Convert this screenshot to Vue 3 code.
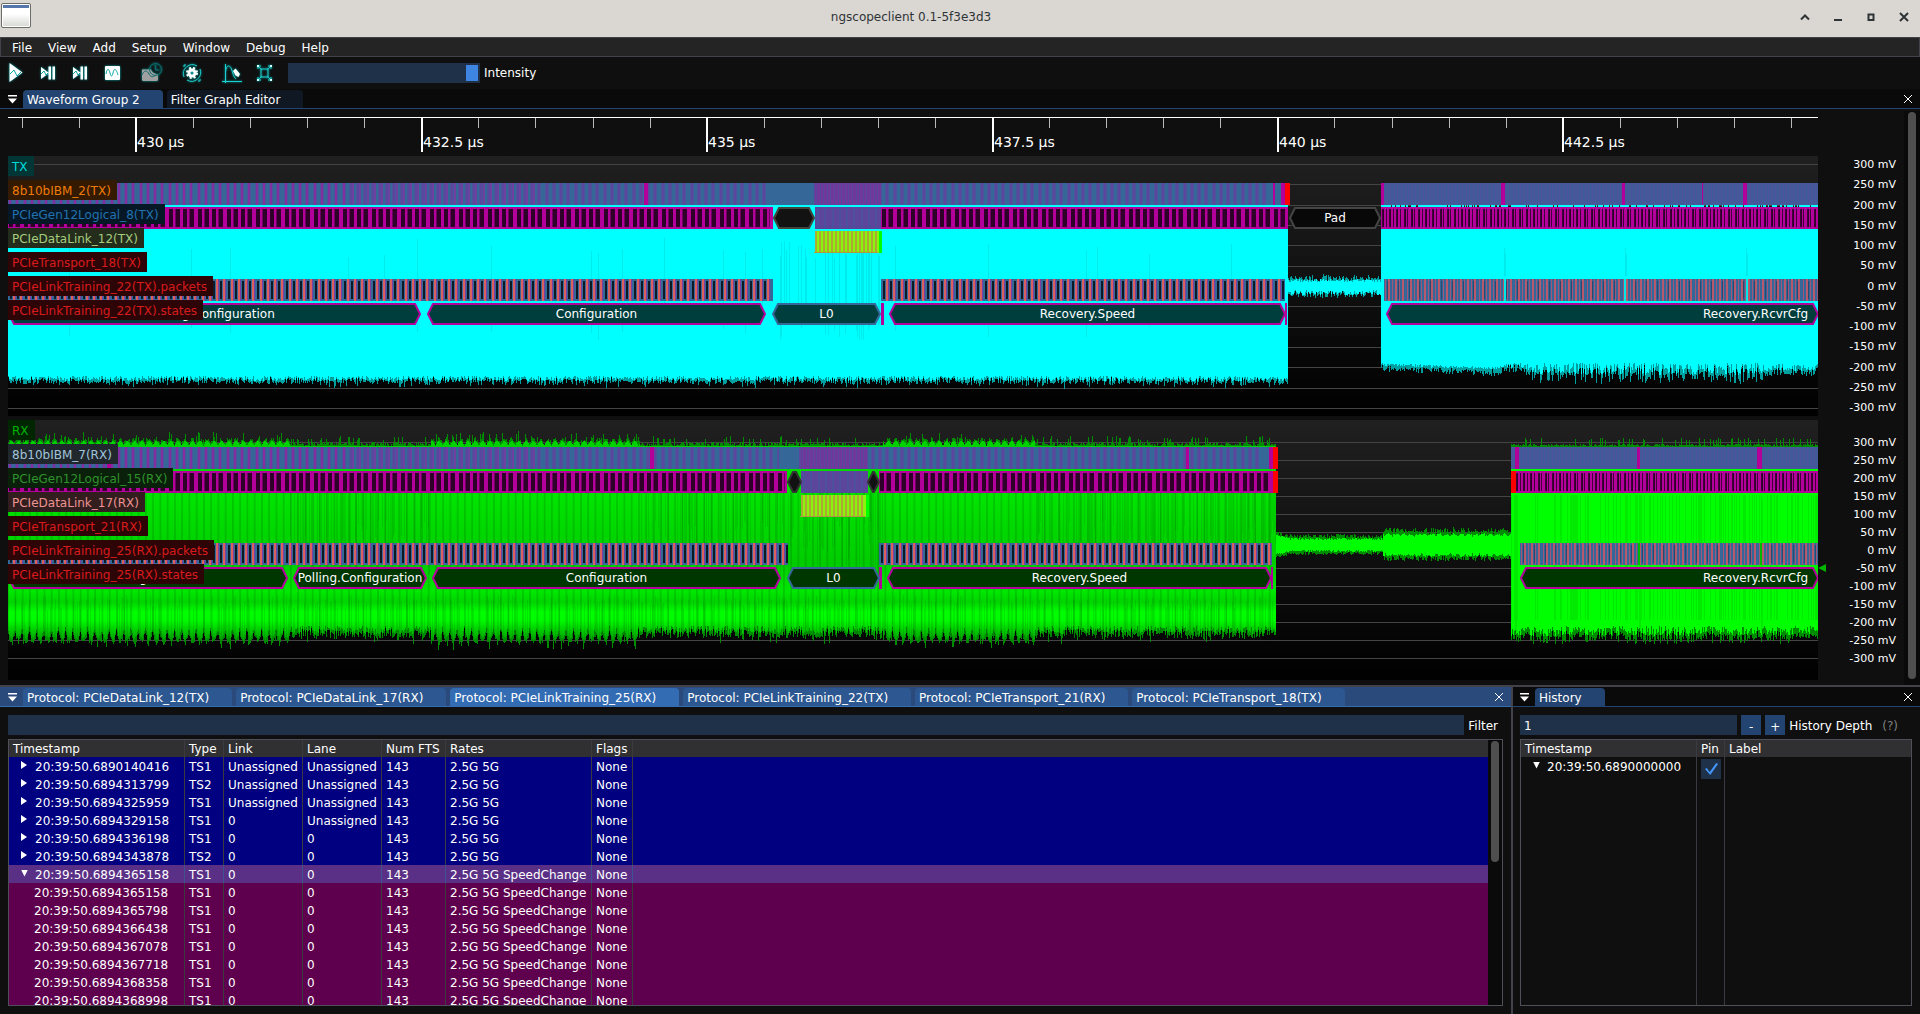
<script setup>
const menus = ['File', 'View', 'Add', 'Setup', 'Window', 'Debug', 'Help']

const X0 = 8
const X1 = 1818
const W = X1 - X0
const pct = (x) => ((x - X0) / W) * 100 + '%'

// timeline
const majors = [
  { x: 135, t: '430 µs' },
  { x: 421, t: '432.5 µs' },
  { x: 706, t: '435 µs' },
  { x: 992, t: '437.5 µs' },
  { x: 1277, t: '440 µs' },
  { x: 1562, t: '442.5 µs' },
]
const minors = []
for (let i = -2; i < 30; i++) {
  const x = Math.round(136 + i * 57.07)
  if (i % 5 !== 0 && x > X0 && x < X1) minors.push(x)
}

const volts = [300, 250, 200, 150, 100, 50, 0, -50, -100, -150, -200, -250, -300]

// seeded noise so the traces are stable between renders
function rng(seed) {
  let a = seed
  return () => {
    a = (a + 0x6d2b79f5) | 0
    let t = Math.imul(a ^ (a >>> 15), 1 | a)
    t = (t + Math.imul(t ^ (t >>> 7), 61 | t)) ^ t
    return ((t ^ (t >>> 14)) >>> 0) / 4294967296
  }
}
const col = (x, a, b) => `M${x} ${Math.round(a)}h1V${Math.round(b)}h-1z`

function bars(x0, x1, period, offset, w, y, h) {
  let d = ''
  for (let x = x0 + offset; x < x1 - w; x += period) {
    d += `M${Math.round(x)} ${y}h${w}v${h}h${-w}z`
  }
  return d
}
const box = (x0, x1, y, h) => `M${x0} ${y}H${x1}V${y + h}H${x0}z`
const hex = (a, b, y) =>
  `M${a + 1} ${y + 11}L${a + 6} ${y + 1}H${b - 6}L${b - 1} ${y + 11}L${b - 6} ${y + 21}H${a + 6}z`

const P = 7.25
const Q = 3.6
const BLUE = '#356799'
const MAG = '#b4009a'

function txWave() {
  const r = rng(7)
  let dim = ''
  let bright = ''
  let faint = ''
  for (let x = X0; x < X1; x++) {
    let t = 28
    let b
    let d
    let td = 28
    if (x < 1288) {
      b = 220 + r() * 5
      d = b + 1 + r() * 4 + (r() < 0.05 ? 4 : 0)
    } else if (x < 1381) {
      t = 123 + r() * 3
      b = 134 + r() * 5
      td = t - r() * 5
      d = b + r() * 4
    } else {
      t = r() < 0.2 ? 51 : 28
      td = t
      if (x < 1500) {
        b = 207 + ((x - 1381) / 120) * 4 + r() * 3
        d = b + 2 + r() * 5
      } else if (x < 1525) {
        b = 207 + r() * 5
        d = b + r() * 8
      } else if (x < 1765) {
        b = 207 + r() * 12
        d = b + 2 + r() * 8
      } else {
        b = 208 + r() * 7
        d = b + 2 + r() * 5
      }
    }
    bright += col(x, t, b)
    dim += col(x, td, d)
    if ((x < 1285 && r() < 0.02) || (x > 773 && x < 882 && r() < 0.2)) {
      faint += col(x, 82 + r() * 20, 165 + r() * 20)
    }
  }
  for (const x of [1504, 1625, 1746]) faint += col(x, 92, 120) + col(x + 1, 98, 120)
  return { dim, bright, faint }
}

function rxWave() {
  const r = rng(21)
  const strong = (x) => x < 290 || (x > 430 && x < 640) || (x > 882 && x < 1035)
  let dim = ''
  let body = ''
  let bright = ''
  let faint = ''
  for (let x = X0; x < X1; x++) {
    const ph = Math.abs(Math.sin((Math.PI * x) / P))
    const s = strong(x)
    if (x < 1276) {
      const t = s ? 26 - 5 * ph : 26
      const td = t - r() * 4 - (r() < 0.12 ? 6 : 0)
      const b = s ? 206 + 11 * ph + r() * 4 : 206 + r() * 8
      body += col(x, t, b)
      dim += col(x, td, b + 2 + r() * 4 + (r() < 0.06 ? 5 : 0))
      if (!s && r() < 0.4) faint += col(x, 73, 100 + r() * 60)
      if (r() < 0.3) faint += col(x, 175 + r() * 15, b)
    } else if (x < 1511) {
      const wide = x > 1382
      const a = wide ? 8 + 2 * ph : 5 + Math.max(0, (1290 - x) / 4)
      bright += col(x, 125 - a - r() * 2, 125 + a + r() * 2)
      dim += col(x, 125 - a - 2 - r() * (wide ? 6 : 4), 125 + a + 2 + r() * (wide ? 5 : 3))
    } else {
      const b = 206 + r() * 10
      bright += col(x, 27, b)
      dim += col(x, 26 - r() * 2 - (r() < 0.15 ? 6 : 0), b + 4 + r() * 5)
      if (r() < 0.3) faint += col(x, 75, 200)
    }
  }
  for (const x of [1515, 1639, 1761]) {
    for (let k = 0; k < 4; k++) faint += col(x, 75, 214) + col(x + 1, 80, 214)
  }
  return { dim, body, bright, faint }
}

function decode(o) {
  const s = []
  const add = (fill, d) => s.push({ fill, d })
  // symbol decode
  for (const [a, b] of o.sym) add(BLUE, box(a, b, 27, 22))
  add('#4d549c', bars(X0, o.symEnd, P, 0, 4, 27, 22))
  add('#5b479e', bars(X0, o.symEnd, P, 1, 2, 27, 22))
  add('#8030a0', bars(X0, 350, P, 1, 2, 27, 22))
  add('#6e40a0', bars(350, 540, P, 2, 2, 27, 22))
  add(BLUE, box(o.idle[0], o.idle[1], 27, 22))
  add('#70389b', box(o.data[0], o.data[1], 27, 22))
  add('#58489e', bars(o.data[0], o.data[1], Q, 1, 1, 27, 22))
  add('#435a99', box(o.fast, X1, 27, 22))
  add('#4c529c', bars(o.fast, X1, Q, 1, 1, 27, 22))
  for (const [x, w] of o.marks) add(MAG, box(x, x + w, 27, 22))
  // logical sub-block
  for (const [a, b] of o.log) {
    add(MAG, box(a, b, 51, 22))
    add('#2e0029', bars(a, b, P, 1, 4, 53, 18))
    add('#6e0061', bars(a, b, P * 2, 7, 1, 53, 18))
  }
  add('#5c469c', box(o.data[0], o.data[1], 51, 22))
  add('#4d519c', bars(o.data[0], o.data[1], P, 2, 2, 51, 22))
  add(MAG, box(o.fastLog, X1, 51, 22))
  add('#40003a', bars(o.fastLog, X1, Q, 1, 1, 53, 18))
  add('#2e0029', bars(o.fastLog, X1, Q * 2, 2, 1, 53, 18))
  // data link
  add('#8af50a', box(o.data[0], o.data[1] - 2, 75, 22))
  add('#aca838', bars(o.data[0], o.data[1] - 2, 4, 0, 2, 75, 22))
  add('#b09a40', box(o.data[0] - 1, o.data[1] - 3, 96, 1))
  add('#00ff00', box(o.data[1] - 2, o.data[1] + 1, 75, 22))
  // training packets
  for (const [a, b] of o.pkt) {
    add(BLUE, box(a, b, 123, 22))
    add('#0d1a26', bars(a, b, P, 2, 2, 125, 18))
    add('#d9605c', bars(a, b, P, 5, 2, 123, 22))
    add('#7a3fa0', bars(a, b, P, 7, 1, 123, 22))
  }
  add(BLUE, box(o.fastPkt, X1, 123, 22))
  add('#a0567c', bars(o.fastPkt, X1, Q, 1, 1, 123, 22))
  add('#b8586c', bars(o.fastPkt, X1, Q * 2, 4, 2, 123, 22))
  add('#244a70', bars(o.fastPkt, X1, Q * 3, 3, 1, 125, 18))
  for (const x of o.gaps) add(o.gap, box(x, x + 2, 123, 22))
  for (const [x, y, w] of o.errors) add('#ff0000', box(x, x + w, y, 22))
  for (const [x, w] of o.stateMarks) add(MAG, box(x, x + w, 147, 22))
  return s
}

const grid = (top, step) => volts.map((_, i) => Math.round(top + i * step))

const channels = [
  {
    id: 'tx',
    wave: txWave(),
    grid: grid(8, 20.33),
    fill: '#003e3e',
    shapes: decode({
      sym: [[X0, 1285]],
      symEnd: 1272,
      idle: [766, 814],
      data: [815, 881],
      fast: 1382,
      marks: [[644, 4], [1273, 2], [1281, 4], [1381, 3], [1501, 4], [1622, 3], [1702, 1], [1743, 4]],
      log: [[X0, 773], [881, 1288]],
      fastLog: 1381,
      pkt: [[X0, 773], [881, 1285]],
      fastPkt: 1384,
      gaps: [1504, 1624, 1746],
      gap: '#00e8e8',
      errors: [[1285, 27, 5]],
      stateMarks: [[881, 3], [1285, 2]],
    }),
    hexes: [
      { d: hex(773, 815, 51), s: '#44443f', f: '#121212' },
      { d: hex(1289, 1381, 51), s: '#444', f: '#080808' },
      { d: hex(8, 421, 147), s: MAG },
      { d: hex(427, 766, 147), s: MAG },
      { d: hex(772, 881, 147), s: BLUE },
      { d: hex(889, 1286, 147), s: MAG },
      { d: hex(1386, 1819, 147), s: MAG },
    ],
    names: [
      { t: 'Pad', a: 1289, b: 1381, row: 'logical' },
      { t: 'Polling.Configuration', a: 8, b: 417 },
      { t: 'Configuration', a: 427, b: 766 },
      { t: 'L0', a: 772, b: 881 },
      { t: 'Recovery.Speed', a: 889, b: 1286 },
      { t: 'Recovery.RcvrCfg', a: 1386, b: 1818, end: true },
    ],
    labels: [
      { t: 'TX', k: 'cyan' },
      { t: '8b10bIBM_2(TX)', k: 'orange' },
      { t: 'PCIeGen12Logical_8(TX)', k: 'navy' },
      { t: 'PCIeDataLink_12(TX)', k: 'olive' },
      { t: 'PCIeTransport_18(TX)', k: 'red' },
      { t: 'PCIeLinkTraining_22(TX).packets', k: 'red' },
      { t: 'PCIeLinkTraining_22(TX).states', k: 'red' },
    ],
  },
  {
    id: 'rx',
    wave: rxWave(),
    grid: grid(22, 18),
    fill: '#003600',
    shapes: decode({
      sym: [[X0, 1271]],
      symEnd: 1265,
      idle: [779, 799],
      data: [801, 868],
      fast: 1511,
      marks: [[107, 4], [650, 4], [1186, 3], [1269, 5], [1515, 4], [1637, 3], [1757, 5]],
      log: [[X0, 787], [879, 1273]],
      fastLog: 1515,
      pkt: [[X0, 788], [879, 1272]],
      fastPkt: 1520,
      gaps: [1638, 1760],
      gap: '#00b800',
      errors: [[1273, 27, 5], [1273, 51, 5], [1511, 51, 5]],
      stateMarks: [[879, 3], [1271, 2]],
    }),
    hexes: [
      { d: hex(787, 802, 51), s: '#333', f: '#121212' },
      { d: hex(867, 880, 51), s: '#333', f: '#121212' },
      { d: hex(8, 288, 147), s: MAG },
      { d: hex(293, 427, 147), s: MAG },
      { d: hex(432, 781, 147), s: MAG },
      { d: hex(787, 880, 147), s: BLUE },
      { d: hex(887, 1272, 147), s: MAG },
      { d: hex(1520, 1819, 147), s: MAG },
    ],
    names: [
      { t: 'Polling.Active', a: 8, b: 288 },
      { t: 'Polling.Configuration', a: 293, b: 427 },
      { t: 'Configuration', a: 432, b: 781 },
      { t: 'L0', a: 787, b: 880 },
      { t: 'Recovery.Speed', a: 887, b: 1272 },
      { t: 'Recovery.RcvrCfg', a: 1520, b: 1818, end: true },
    ],
    labels: [
      { t: 'RX', k: 'green' },
      { t: '8b10bIBM_7(RX)', k: 'steel' },
      { t: 'PCIeGen12Logical_15(RX)', k: 'forest' },
      { t: 'PCIeDataLink_17(RX)', k: 'salmon' },
      { t: 'PCIeTransport_21(RX)', k: 'red' },
      { t: 'PCIeLinkTraining_25(RX).packets', k: 'red' },
      { t: 'PCIeLinkTraining_25(RX).states', k: 'red' },
    ],
  },
]

const protoTabs = [
  'PCIeDataLink_12(TX)',
  'PCIeDataLink_17(RX)',
  'PCIeLinkTraining_25(RX)',
  'PCIeLinkTraining_22(TX)',
  'PCIeTransport_21(RX)',
  'PCIeTransport_18(TX)',
]

const U = 'Unassigned'
const SC = '2.5G 5G SpeedChange'
const rows = [
  ['20:39:50.6890140416', 'TS1', U, U, '2.5G 5G', 'closed'],
  ['20:39:50.6894313799', 'TS2', U, U, '2.5G 5G', 'closed'],
  ['20:39:50.6894325959', 'TS1', U, U, '2.5G 5G', 'closed'],
  ['20:39:50.6894329158', 'TS1', '0', U, '2.5G 5G', 'closed'],
  ['20:39:50.6894336198', 'TS1', '0', '0', '2.5G 5G', 'closed'],
  ['20:39:50.6894343878', 'TS2', '0', '0', '2.5G 5G', 'closed'],
  ['20:39:50.6894365158', 'TS1', '0', '0', SC, 'open'],
  ['20:39:50.6894365158', 'TS1', '0', '0', SC, 'child'],
  ['20:39:50.6894365798', 'TS1', '0', '0', SC, 'child'],
  ['20:39:50.6894366438', 'TS1', '0', '0', SC, 'child'],
  ['20:39:50.6894367078', 'TS1', '0', '0', SC, 'child'],
  ['20:39:50.6894367718', 'TS1', '0', '0', SC, 'child'],
  ['20:39:50.6894368358', 'TS1', '0', '0', SC, 'child'],
  ['20:39:50.6894368998', 'TS1', '0', '0', SC, 'child'],
]
</script>

<template>
  <div class="app">
    <header class="titlebar">
      <span class="win-icon"></span>
      <h1>ngscopeclient 0.1-5f3e3d3</h1>
      <div class="win-controls">
        <button aria-label="Roll up"><svg viewBox="0 0 12 12"><path d="M2 8.500L6 4.500L10 8.500" /></svg></button>
        <button aria-label="Minimize"><svg viewBox="0 0 12 12"><path d="M2 9H10" /></svg></button>
        <button aria-label="Maximize"><svg viewBox="0 0 12 12"><path d="M3.500 3.500H8.500V9H3.500z" /></svg></button>
        <button aria-label="Close"><svg viewBox="0 0 12 12"><path d="M2 2L10 10M10 2L2 10" /></svg></button>
      </div>
    </header>

    <nav class="menubar">
      <button v-for="m in menus" :key="m">{{ m }}</button>
    </nav>

    <div class="toolbar">
      <div class="tools">
        <button aria-label="Start">
          <svg viewBox="4 59 24 24">
            <path class="w" d="M9.500 62L22.500 71.500L9.500 81z" />
            <path class="t" d="M10 73L14 69L17 75L21 71" />
          </svg>
        </button>
        <button aria-label="Single">
          <svg viewBox="36 59 24 24">
            <path class="w" d="M41 66L49 72L41 78z" />
            <path class="t" d="M41 73L44 70L46 74L48 72" />
            <path class="w" d="M48.500 65.500h2.500v13h-2.500zM52.500 65.500h2.500v13h-2.500z" />
          </svg>
        </button>
        <button aria-label="Force">
          <svg viewBox="68 59 24 24">
            <path class="w" d="M73 66L81 72L73 78z" />
            <path class="t" d="M73 73L76 70L78 74L80 72" />
            <path class="w" d="M80.500 65.500h2.500v13h-2.500zM84.500 65.500h2.500v13h-2.500z" />
          </svg>
        </button>
        <button aria-label="Auto">
          <svg viewBox="100 59 24 24">
            <rect class="w" x="105" y="65" width="15" height="14" rx="1" />
            <path class="t" d="M106 73C107 67 109 67 110 72C111 76 112 76 113 72C114 67 116 67 118 74" />
          </svg>
        </button>
      </div>
      <div class="tools">
        <button aria-label="History">
          <svg viewBox="140 59 24 24" class="dimmed">
            <path class="g" d="M142 68.500h9q1 4 7 5v5q0 1.500-1.500 1.500h-13q-1.500 0-1.500-1.500z" />
            <path class="t" d="M142 74C144 69 147 69 149 73C151 77 154 76 156 73.500" />
            <circle class="t" cx="155.500" cy="68.500" r="6" />
            <path class="t" d="M155.500 64V69H159" />
          </svg>
        </button>
      </div>
      <div class="tools">
        <button aria-label="Refresh settings">
          <svg viewBox="180 59 24 24">
            <circle class="w" cx="192" cy="72" r="4.500" />
            <circle class="teeth" cx="192" cy="72" r="5" />
            <circle class="hole" cx="192" cy="72" r="1.600" />
            <path class="c" d="M184 76A9 9 0 0 1 197 65M200 68A9 9 0 0 1 187 79M186 64L184 64L184 66M198 80L200 80L200 78" />
          </svg>
        </button>
      </div>
      <div class="tools">
        <button aria-label="Clear sweeps">
          <svg viewBox="220 59 24 24">
            <path class="c" d="M225.500 63V82M222 80.500H242M225.500 71C226 65 229 63 231 67C233 71 233 76 236 78" />
            <path class="w" d="M233 70L235.500 67.500L240 73L238.500 76L235.500 74.500z" />
          </svg>
        </button>
        <button aria-label="Fullscreen">
          <svg viewBox="252 59 24 24">
            <path class="c" d="M258 68V65H261M268 65H271V68M271 76V79H268M261 79H258V76M258 65L262 69M271 65L267 69M271 79L267 75M258 79L262 75M261 68H268V76H261z" />
            <path class="dots" d="M257 64h2v2h-2zM270 64h2v2h-2zM257 78h2v2h-2zM270 78h2v2h-2z" />
          </svg>
        </button>
      </div>
      <input id="intensity" class="slider" type="range" min="0" max="100" value="100" />
      <label for="intensity">Intensity</label>
    </div>

    <section class="group">
      <div class="tabbar">
        <button class="tab-menu" aria-label="Tab list"></button>
        <button class="tab active">Waveform Group 2</button>
        <button class="tab">Filter Graph Editor</button>
        <button class="close" aria-label="Close group"><svg viewBox="0 0 10 10"><path d="M1 1L9 9M9 1L1 9" /></svg></button>
      </div>
      <div class="group-body">
        <div class="scope">
          <div class="timeline">
            <svg :viewBox="`${X0} 0 ${W} 42`" preserveAspectRatio="none">
              <path class="rule" :d="`M${X0} 6h${W}v1h${-W}z`" />
              <rect v-for="m in minors" :key="m" class="minor" :x="m" y="7" width="1" height="10" />
              <rect v-for="m in majors" :key="m.x" class="rule" :x="m.x" y="7" width="2" height="34" />
            </svg>
            <span v-for="m in majors" :key="m.t" :style="{ left: pct(m.x) }">{{ m.t }}</span>
          </div>

          <div v-for="c in channels" :key="c.id" class="channel">
            <div class="plot">
              <svg :viewBox="`${X0} 0 ${W} 260`" preserveAspectRatio="none">
                <defs>
                  <linearGradient :id="c.id + '-body'" gradientUnits="userSpaceOnUse" x1="0" y1="20" x2="0" y2="225">
                    <stop offset="0" stop-color="#00d000" />
                    <stop offset="0.28" stop-color="#00e400" />
                    <stop offset="0.6" stop-color="#00cc00" />
                    <stop offset="0.74" stop-color="#00e800" />
                    <stop offset="0.79" stop-color="#00d400" />
                    <stop offset="0.84" stop-color="#00ff00" />
                    <stop offset="0.88" stop-color="#00fa00" />
                    <stop offset="1" stop-color="#008800" />
                  </linearGradient>
                  <pattern :id="c.id + '-ripple'" patternUnits="userSpaceOnUse" width="7.25" height="260">
                    <rect width="2" height="260" fill="#000" opacity="0.12" />
                  </pattern>
                </defs>
                <rect v-for="y in c.grid" :key="y" class="gridline" :x="X0" :y="y" :width="W" height="1" />
                <path :class="['dim', c.id]" :d="c.wave.dim" />
                <path v-if="c.wave.body" :d="c.wave.body" :fill="`url(#${c.id}-body)`" />
                <rect v-if="c.wave.body" :x="X0" y="60" width="1268" height="158" :fill="`url(#${c.id}-ripple)`" />
                <path :class="['bright', c.id]" :d="c.wave.bright" />
                <path class="faint" :d="c.wave.faint" />
                <path v-for="(s, i) in c.shapes" :key="i" :d="s.d" :fill="s.fill" />
                <path v-for="h in c.hexes" :key="h.d" class="hex" :d="h.d" :stroke="h.s" :fill="h.f || c.fill" />
              </svg>
              <span
                v-for="n in c.names"
                :key="n.a"
                :class="['name', n.row, { end: n.end }]"
                :style="{ left: pct(n.a), width: ((n.b - n.a) / W) * 100 + '%' }"
              >{{ n.t }}</span>
              <div class="labels">
                <span v-for="l in c.labels" :key="l.t" :class="l.k">{{ l.t }}</span>
              </div>
            </div>
            <div :class="['axis', c.id]">
              <span v-for="v in volts" :key="v">{{ v }} mV</span>
              <i v-if="c.id === 'rx'" class="trigger"></i>
            </div>
          </div>
        </div>
        <div class="scrollbar"><i></i></div>
      </div>
    </section>

    <div class="bottom">
      <section class="panel protocols">
        <div class="tabbar focused">
          <button class="tab-menu" aria-label="Tab list"></button>
          <button v-for="(t, i) in protoTabs" :key="t" :class="['tab', { active: i === 2 }]">Protocol: {{ t }}</button>
          <button class="close" aria-label="Close analyzer"><svg viewBox="0 0 10 10"><path d="M1 1L9 9M9 1L1 9" /></svg></button>
        </div>
        <div class="panel-body">
          <div class="field-row">
            <input id="filter" type="text" />
            <label for="filter">Filter</label>
          </div>
          <div class="table-box">
            <div class="table-scroll">
              <table>
                <colgroup>
                  <col class="c-time" /><col class="c-type" /><col class="c-link" /><col class="c-link" />
                  <col class="c-fts" /><col class="c-rates" /><col class="c-flags" /><col />
                </colgroup>
                <thead>
                  <tr>
                    <th>Timestamp</th><th>Type</th><th>Link</th><th>Lane</th><th>Num FTS</th><th>Rates</th><th>Flags</th><th></th>
                  </tr>
                </thead>
                <tbody>
                  <tr v-for="(r, i) in rows" :key="i" :class="r[5]">
                    <td>
                      <div class="stamp"><button v-if="r[5] !== 'child'" class="arrow" aria-label="Toggle packet"></button>{{ r[0] }}</div>
                    </td>
                    <td>{{ r[1] }}</td>
                    <td>{{ r[2] }}</td>
                    <td>{{ r[3] }}</td>
                    <td>143</td>
                    <td>{{ r[4] }}</td>
                    <td>None</td>
                    <td></td>
                  </tr>
                </tbody>
              </table>
            </div>
            <div class="scrollbar"><i></i></div>
          </div>
        </div>
      </section>

      <section class="panel history">
        <div class="tabbar">
          <button class="tab-menu" aria-label="Tab list"></button>
          <button class="tab active">History</button>
          <button class="close" aria-label="Close history"><svg viewBox="0 0 10 10"><path d="M1 1L9 9M9 1L1 9" /></svg></button>
        </div>
        <div class="panel-body">
          <div class="field-row">
            <input id="depth" type="text" value="1" />
            <button class="step">-</button>
            <button class="step">+</button>
            <label for="depth">History Depth</label>
            <span class="help">(?)</span>
          </div>
          <div class="table-box">
            <div class="table-scroll">
              <table>
                <colgroup><col class="h-time" /><col class="h-pin" /><col /></colgroup>
                <thead>
                  <tr><th>Timestamp</th><th>Pin</th><th>Label</th></tr>
                </thead>
                <tbody>
                  <tr class="entry">
                    <td>
                      <div class="stamp"><button class="arrow down" aria-label="Toggle entry"></button>20:39:50.6890000000</div>
                    </td>
                    <td><input type="checkbox" checked aria-label="Pin" /></td>
                    <td></td>
                  </tr>
                  <tr class="rest"><td></td><td></td><td></td></tr>
                </tbody>
              </table>
            </div>
          </div>
        </div>
      </section>
    </div>
  </div>
</template>

<style>
body {
  background: #0f0f0f;
}
</style>

<style scoped>
.app {
  display: flex;
  flex-direction: column;
  height: 100vh;
  overflow: hidden;
  background: #0f0f0f;
  color: #fff;
  font: 12px/18px "DejaVu Sans", sans-serif;
}
.app *,
.app *::before {
  box-sizing: border-box;
}
button,
input {
  margin: 0;
  padding: 0;
  border: 0;
  background: none;
  color: inherit;
  font: inherit;
}
svg {
  display: block;
}

.titlebar {
  display: flex;
  align-items: flex-start;
  flex: none;
  height: 37px;
  padding: 3px 10px 0 1px;
  background: #dad6d2;
  color: #2e3436;
}
.win-icon {
  width: 30px;
  height: 25px;
  border: 1px solid #6b6d69;
  border-radius: 2px;
  background: linear-gradient(#fff 0 1px, #5577ab 1px 4px, #fff 4px, #fff 10px, #d5d8d2 100%);
  box-shadow: inset 0 0 0 1px #fff;
}
.titlebar h1 {
  flex: 1;
  margin: 5px 0 0;
  font-size: 12px;
  font-weight: 400;
  line-height: 18px;
  text-align: center;
}
.win-controls {
  display: flex;
  gap: 21px;
  padding-top: 8px;
  padding-left: 8px;
}
.win-controls svg {
  width: 12px;
  height: 12px;
  fill: none;
  stroke: #2e3436;
  stroke-width: 2;
}

.menubar {
  display: flex;
  flex: none;
  gap: 16px;
  height: 20px;
  padding: 1px 0 0 11px;
  border: 1px solid #42424b;
  background: #242424;
}

.toolbar {
  display: flex;
  flex: none;
  align-items: center;
  height: 32px;
  padding-left: 4px;
  gap: 16px;
}
.tools {
  display: flex;
  gap: 8px;
  padding-bottom: 2px;
}
.tools svg {
  width: 24px;
  height: 24px;
  fill: none;
  filter: drop-shadow(0 0 1px #00b4b4);
}
.tools .w {
  fill: #fff;
}
.tools .g {
  fill: #a0a0a0;
}
.tools .t {
  stroke: #0aa6a6;
}
.tools .c {
  stroke: #1cd0d0;
}
.tools .dots {
  fill: #d8ffff;
}
.tools .teeth {
  stroke: #fff;
  stroke-width: 2;
  stroke-dasharray: 2 2;
}
.tools .hole {
  fill: #0f8f8f;
}
.tools .dimmed .t {
  stroke: #0c6c6c;
}
.slider {
  appearance: none;
  width: 192px;
  height: 20px;
  margin-left: -4px;
  padding: 0 2px;
  background: #1f3049;
}
.slider::-webkit-slider-thumb {
  appearance: none;
  width: 12px;
  height: 16px;
  background: #3d85e0;
}
.toolbar label {
  margin-left: -12px;
}

.group {
  flex: none;
}
.tabbar {
  display: flex;
  align-items: flex-end;
  gap: 4px;
  height: 20px;
  padding-right: 7px;
  border-bottom: 1px solid #234470;
  background: #0a0a0a;
}
.tab {
  height: 18px;
  padding: 2px 23px 0 4px;
  border-radius: 4px 4px 0 0;
  background: #101824;
  line-height: 16px;
  white-space: nowrap;
}
.tab.active {
  background: #234470;
}
.tabbar.focused {
  border-color: #336cb3;
  background: #294a7a;
}
.focused .tab {
  background: #2c5790;
}
.focused .tab.active {
  background: #336cb3;
}
.tab-menu {
  width: 11px;
  height: 18px;
  margin: 0 0 0 8px;
}
.history .tab-menu {
  margin-left: 7px;
}
.tab-menu::before {
  content: "";
  display: block;
  width: 9px;
  height: 9px;
  background: #fff;
  clip-path: polygon(0 0, 100% 0, 100% 2px, 0 2px, 0 4px, 100% 4px, 50% 100%, 0 4px);
}
.close {
  align-self: center;
  margin-left: auto;
}
.close svg {
  width: 10px;
  height: 10px;
  fill: none;
  stroke: #fff;
}

.group-body {
  display: flex;
  height: 576px;
  padding: 2px 0 0 8px;
}
.scope {
  display: flex;
  flex: 1;
  flex-direction: column;
  gap: 4px;
  min-width: 0;
}
.timeline {
  position: relative;
  height: 41px;
  margin-right: 86px;
}
.timeline svg {
  width: 100%;
  height: 42px;
  shape-rendering: crispEdges;
}
.rule {
  fill: #fff;
}
.minor {
  fill: #b8b8b8;
}
.timeline span {
  position: absolute;
  top: 22px;
  padding-left: 2px;
  font-size: 14px;
}
.channel {
  display: flex;
}
.plot {
  position: relative;
  flex: 1;
  height: 260px;
  overflow: hidden;
  background: linear-gradient(#202020, #000);
}
.plot svg {
  width: 100%;
  height: 260px;
  shape-rendering: crispEdges;
}
.plot .hex {
  stroke-width: 2;
  shape-rendering: auto;
}
.gridline {
  fill: #444;
}
.dim.tx {
  fill: #00a0a0;
}
.bright.tx {
  fill: #00ffff;
}
.dim.rx {
  fill: #008c00;
}
.bright.rx {
  fill: #00ff00;
}
.faint {
  fill: #000;
  opacity: 0.08;
}
.name {
  position: absolute;
  top: 149px;
  text-align: center;
  white-space: nowrap;
}
.name.logical {
  top: 53px;
}
.name.end {
  padding-right: 10px;
  text-align: right;
}
.labels {
  position: absolute;
  top: 0;
  left: 0;
  display: flex;
  flex-direction: column;
  align-items: flex-start;
  gap: 4px;
}
.labels span {
  height: 20px;
  padding: 2px 6px 0 4px;
}
.cyan {
  background: #003636;
  color: #00dcdc;
}
.orange {
  background: #331a00;
  color: #f07c08;
}
.navy {
  background: #061826;
  color: #2272b0;
}
.olive {
  background: #242c1c;
  color: #a6cc7e;
}
.red {
  background: #2d0506;
  color: #d81b1d;
}
.green {
  background: #002600;
  color: #00b400;
}
.steel {
  background: #21282d;
  color: #a0c4da;
}
.forest {
  background: #0a200a;
  color: #2f922c;
}
.salmon {
  background: #321e1e;
  color: #ee9492;
}
.axis {
  position: relative;
  display: flex;
  flex-direction: column;
  justify-content: space-between;
  width: 86px;
  padding-top: 1px;
  padding-right: 8px;
  font-size: 11px;
  line-height: 16px;
  text-align: right;
}
.axis.rx {
  padding-top: 15px;
  padding-bottom: 13px;
}
.trigger {
  position: absolute;
  top: 144px;
  left: 0;
  border: 4px solid transparent;
  border-right: 8px solid #00b400;
  border-left: 0;
}
.scrollbar {
  width: 16px;
  padding: 1px 4px 6px;
  background: #0a0a0a;
}
.scrollbar i {
  display: block;
  height: 100%;
  border-radius: 4px;
  background: #4f4f4f;
}

.bottom {
  display: flex;
  flex: 1;
  min-height: 0;
  gap: 2px;
  border-top: 2px solid #42424b;
  background: #42424b;
}
.panel {
  display: flex;
  flex-direction: column;
  min-width: 0;
  background: #0f0f0f;
}
.protocols {
  flex: 1;
}
.history {
  flex: none;
  width: 407px;
}
.panel-body {
  display: flex;
  flex: 1;
  flex-direction: column;
  gap: 4px;
  min-height: 0;
  padding: 8px;
}
.history .panel-body {
  padding-left: 7px;
}
.field-row {
  display: flex;
  flex: none;
  gap: 4px;
  height: 20px;
  line-height: 22px;
}
.protocols .field-row {
  padding-right: 5px;
}
.field-row input {
  flex: 1;
  min-width: 0;
  padding: 2px 4px 0;
  background: #1f3049;
}
.step {
  width: 20px;
  padding-top: 1px;
  background: #234470;
}
.help {
  padding: 0 14px 0 6px;
  color: #808080;
}
.table-box {
  display: flex;
  flex: 1;
  min-height: 0;
  border: 1px solid #4f4f59;
}
.table-scroll {
  flex: 1;
  min-width: 0;
  overflow: hidden;
}
.table-box .scrollbar {
  width: 14px;
  padding: 1px 3px;
}
.table-box .scrollbar i {
  height: 46%;
}
table {
  width: 100%;
  border-spacing: 0;
  table-layout: fixed;
}
.c-time {
  width: 176px;
}
.c-type {
  width: 39px;
}
.c-link {
  width: 79px;
}
.c-fts {
  width: 64px;
}
.c-rates {
  width: 146px;
}
.c-flags {
  width: 41px;
}
.h-time {
  width: 176px;
}
.h-pin {
  width: 28px;
}
th,
td {
  height: 18px;
  padding: 2px 0 0 4px;
  border-right: 1px solid #3a3a40;
  font-weight: 400;
  line-height: 16px;
  text-align: left;
  white-space: nowrap;
}
th {
  height: 17px;
  background: #303033;
  line-height: 15px;
}
th:last-child,
td:last-child {
  border-right: 0;
}
.closed {
  background: #000080;
}
.open {
  background: #5a3086;
}
.open td {
  border-color: #3e5290;
}
.child {
  background: #5e004e;
}
.stamp {
  display: flex;
  align-items: flex-start;
  padding-left: 8px;
}
.child .stamp {
  padding-left: 21px;
}
.arrow {
  width: 14px;
  height: 12px;
}
.arrow::before {
  content: "";
  display: block;
  width: 6px;
  height: 8px;
  background: #fff;
  clip-path: polygon(0 0, 100% 50%, 0 100%);
}
.open .arrow::before,
.arrow.down::before {
  width: 7px;
  height: 7px;
  clip-path: polygon(0 0, 100% 0, 50% 100%);
}
.history table {
  height: 100%;
}
.entry td {
  height: 24px;
  vertical-align: top;
}
.rest td {
  height: auto;
}
.entry input {
  display: block;
  appearance: none;
  width: 20px;
  height: 20px;
  padding: 4px;
  background: #1f3049;
}
.entry input::before {
  content: "";
  display: block;
  width: 13px;
  height: 12px;
  background: #4296fa;
  clip-path: polygon(0 50%, 14% 42%, 36% 74%, 86% 0, 100% 8%, 40% 100%);
}
</style>
